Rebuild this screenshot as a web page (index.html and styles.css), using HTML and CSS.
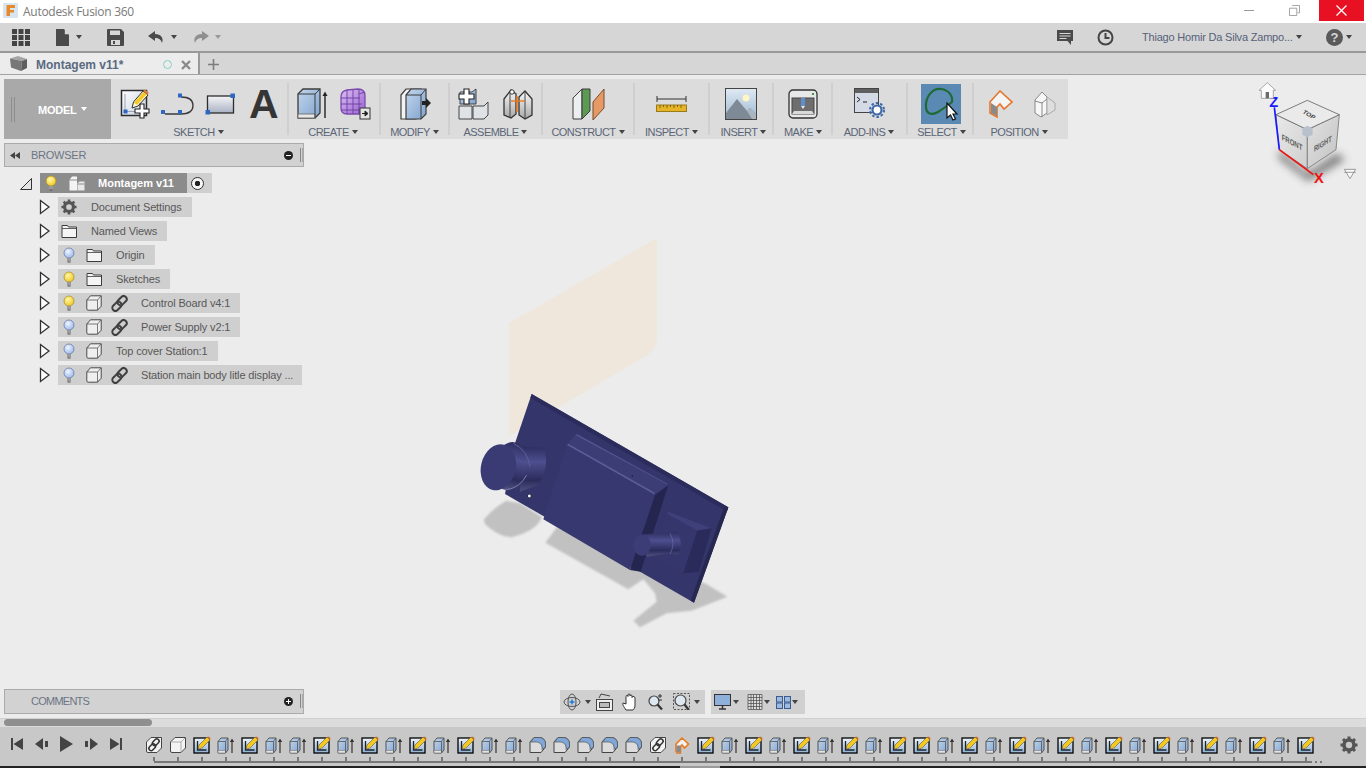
FILE: index.html
```html
<!DOCTYPE html>
<html lang="en">
<head>
<meta charset="utf-8">
<title>Autodesk Fusion 360</title>
<link rel="stylesheet" href="styles.css">
</head>
<body>
<svg class="defs" width="0" height="0" aria-hidden="true">
  <defs>
    <linearGradient id="gBox" x1="0" y1="0" x2="1" y2="1"><stop offset="0" stop-color="#fff"/><stop offset="1" stop-color="#c3d0e0"/></linearGradient>
    <linearGradient id="gSky" x1="0" y1="0" x2="0" y2="1"><stop offset="0" stop-color="#eef4fb"/><stop offset="1" stop-color="#8fb2d9"/></linearGradient>
    <linearGradient id="gRect" x1="0" y1="0" x2="0" y2="1"><stop offset="0" stop-color="#f4f5f7"/><stop offset="1" stop-color="#a9b1c3"/></linearGradient>
    <linearGradient id="gBlue" x1="0" y1="0" x2="1" y2="1"><stop offset="0" stop-color="#c3d6ec"/><stop offset="1" stop-color="#7fa3cf"/></linearGradient>
    <linearGradient id="gGrey" x1="0" y1="0" x2="0" y2="1"><stop offset="0" stop-color="#fafafa"/><stop offset="1" stop-color="#a8a8a8"/></linearGradient>
    <linearGradient id="gPurple" x1="0" y1="0" x2="1" y2="1"><stop offset="0" stop-color="#dcbdf2"/><stop offset="1" stop-color="#9a63d0"/></linearGradient>
    <linearGradient id="gMount" x1="0" y1="0" x2="0" y2="1"><stop offset="0" stop-color="#dfe9f2"/><stop offset="1" stop-color="#9fbad3"/></linearGradient>
    <radialGradient id="gBulbY" cx=".4" cy=".35" r=".7"><stop offset="0" stop-color="#fff7a8"/><stop offset="1" stop-color="#f2c71d"/></radialGradient>
    <radialGradient id="gBulbB" cx=".4" cy=".35" r=".7"><stop offset="0" stop-color="#f0f5ff"/><stop offset="1" stop-color="#98b6ea"/></radialGradient>
    <linearGradient id="gCyl" x1="0" y1="0" x2="0" y2="1"><stop offset="0" stop-color="#2c2d5e"/><stop offset=".35" stop-color="#4d4f8f"/><stop offset=".75" stop-color="#2b2c5c"/><stop offset="1" stop-color="#50527f"/></linearGradient>
    <linearGradient id="gFaceL" x1="0" y1="0" x2="1" y2="1"><stop offset="0" stop-color="#e9e9e9"/><stop offset="1" stop-color="#cfcfcf"/></linearGradient>
    <linearGradient id="gFaceR" x1="0" y1="0" x2="1" y2="1"><stop offset="0" stop-color="#e2e2e2"/><stop offset="1" stop-color="#c2c2c2"/></linearGradient>
    <filter id="fBlur" x="-30%" y="-30%" width="160%" height="160%"><feGaussianBlur stdDeviation="12"/></filter>
    <filter id="fShadow" x="-5%" y="-5%" width="110%" height="110%"><feGaussianBlur stdDeviation="2.500"/></filter>

    <symbol id="bulbY" viewBox="0 0 16 16"><circle cx="8" cy="6" r="5" fill="url(#gBulbY)" stroke="#a98f2a" stroke-width=".8"/><path d="M6 11h4v3.500H6z" fill="#9a9a9a"/><path d="M6.500 15h3" stroke="#555"/></symbol>
    <symbol id="bulbB" viewBox="0 0 16 16"><circle cx="8" cy="6" r="5" fill="url(#gBulbB)" stroke="#6b7fa8" stroke-width=".8"/><path d="M6 11h4v3.500H6z" fill="#9a9a9a"/><path d="M6.500 15h3" stroke="#555"/></symbol>
    <symbol id="folder" viewBox="0 0 16 16"><path d="M1 2.500h5.500l1 1.500H15.500v10.500H1z" fill="#f4f4f4" stroke="#3c3c3c"/><path d="M1 5.500h14.500" stroke="#3c3c3c" stroke-width=".8"/></symbol>
    <symbol id="comp" viewBox="0 0 16 16"><path d="M.8 5 4.500.8H15.200v10.400L11.500 15.200H2.300A1.500 1.500 0 0 1 .8 13.700z" fill="#efefef" stroke="#4a4a4a"/><path d="M.8 5H11.500V15.200M11.500 5 15.200.8" fill="none" stroke="#5a5a5a" stroke-width=".8"/></symbol>
    <symbol id="link" viewBox="0 0 18 18"><g fill="none" stroke="#3f3f3f" stroke-width="2.100"><rect x="8.500" y=".5" width="6.500" height="11" rx="3.200" transform="rotate(45 11.750 6)"/><rect x="3" y="6.500" width="6.500" height="11" rx="3.200" transform="rotate(45 6.250 12)"/></g></symbol>
    <symbol id="gear" viewBox="0 0 18 18"><circle cx="9" cy="9" r="5" fill="none" stroke="#555" stroke-width="3.600"/><g stroke="#555" stroke-width="3"><path d="M9 .5v3M9 14.500v3M.5 9h3M14.500 9h3M3 3l2.100 2.100M12.900 12.900 15 15M3 15l2.100-2.100M12.900 5.100 15 3"/></g></symbol>
    <symbol id="tri" viewBox="0 0 12 16"><path d="M1.500 1.500 10 8 1.500 14.500z" fill="#fdfdfd" stroke="#333" stroke-width="1.300"/></symbol>

    <symbol id="tS" viewBox="0 0 18 18"><rect x="1" y="2" width="15" height="15" fill="url(#gSky)" stroke="#000" stroke-width="1.300"/><path d="M4.500 5v9h9" fill="none" stroke="#222" stroke-width="1.300"/><path d="m5 13 1-4L14 1l3 3-8 8z" fill="#f4c81f" stroke="#555" stroke-width=".6"/><path d="m14 1 3 3 .8-1.200L15.500.4z" fill="#d9772f"/></symbol>
    <symbol id="tE" viewBox="0 0 18 18"><path d="M1 5.500 4 2h7v12l-2.500 3H1z" fill="url(#gBlue)" stroke="#555" stroke-width="1"/><path d="M1 14.500h7.500v2.500H1z" fill="#e4e4e4" stroke="#777" stroke-width=".6"/><path d="M1 5.500h7.500V17M8.500 5.500 11 2" fill="none" stroke="#555" stroke-width=".8"/><path d="M15 17V5" stroke="#333" stroke-width="1.200"/><path d="m12.800 6 2.200-3.500L17.200 6z" fill="#333"/></symbol>
    <symbol id="tC" viewBox="0 0 18 18"><path d="M1.500 6 6 1.500h10.500v10.500L12 16.500H3a1.500 1.500 0 0 1-1.500-1.500z" fill="#f3f3f3" stroke="#444"/><path d="M1.500 6H12v10.500M12 6l4.500-4.500" fill="none" stroke="#999" stroke-width=".8"/></symbol>
    <symbol id="tL" viewBox="0 0 18 18"><path d="M1.500 6 6 1.500h10.500v10.500L12 16.500H3a1.500 1.500 0 0 1-1.500-1.500z" fill="#f3f3f3" stroke="#444"/><g fill="none" stroke="#333" stroke-width="1.500"><rect x="8.500" y="2.500" width="4.500" height="7.500" rx="2.200" transform="rotate(45 10.750 6.250)"/><rect x="5" y="7.500" width="4.500" height="7.500" rx="2.200" transform="rotate(45 7.250 11.250)"/></g></symbol>
    <symbol id="tF" viewBox="0 0 18 18"><path d="M1 6 5 1.500h5.500A6 6 0 0 1 16.500 8v3L12 16.500H1z" fill="#dcdcdc" stroke="#444"/><path d="M5 1.500h5.500A6 6 0 0 1 16.500 8v3l-3.500 2.500V11A6 6 0 0 0 7.500 6H1.500z" fill="#7fa6d6" stroke="#555" stroke-width=".7"/></symbol>
    <symbol id="tM" viewBox="0 0 18 18"><path d="M3 8 9 2 15.500 8 11.500 12 9 9 7.500 10.500V17H4L3 15z" fill="#f1f1f1" stroke="#e8791d" stroke-width="1.600"/><path d="M3.500 9.500h4v7H4.500L3.500 15z" fill="#8a8a8a"/></symbol>
  </defs>
</svg>

<div class="app">
  <header class="titlebar">
    <svg class="app-logo" width="15" height="15" viewBox="0 0 15 15"><rect width="15" height="15" fill="#d6e5f2"/><path d="M3.500 2H12v3H7v2h4v2.500H7V13H3.500z" fill="#e88a2a"/></svg>
    <span class="app-name">Autodesk Fusion 360</span>
    <div class="winctl">
      <span class="win-min"></span>
      <svg class="win-max" width="11" height="11" viewBox="0 0 12 12"><path d="M3.500.5h8v8h-2M.500 3.500h8v8h-8z" fill="none" stroke="#9a9a9a"/></svg>
      <span class="win-close"><svg width="11" height="11" viewBox="0 0 11 11"><path d="m.5.500 10 10M10.500.500l-10 10" stroke="#fff" stroke-width="1.300"/></svg></span>
    </div>
  </header>

  <nav class="qat">
    <svg class="q-grid" width="18" height="17" viewBox="0 0 18 17"><path fill="#444" d="M0 0h5v5H0zM6.500 0h5v5h-5zM13 0h5v5h-5zM0 6h5v5H0zM6.500 6h5v5h-5zM13 6h5v5h-5zM0 12h5v5H0zM6.500 12h5v5h-5zM13 12h5v5h-5z"/></svg>
    <svg class="q-file" width="14" height="17" viewBox="0 0 14 17"><path fill="#4a4a4a" d="M0 0h8l5 5.500V17H0z"/><path fill="#d6d6d6" d="M8.800 0 14 5.200H8.800z"/></svg>
    <i class="caret q-caret"></i>
    <svg class="q-save" width="17" height="17" viewBox="0 0 17 17"><path fill="#4a4a4a" d="M1 0h13l3 3v13a1 1 0 0 1-1 1H1a1 1 0 0 1-1-1V1a1 1 0 0 1 1-1z"/><path fill="#d6d6d6" d="M3 1.500h10v4.500H3zM4 11h9v5H4z"/><path fill="#4a4a4a" d="M6 12h2v3H6z"/></svg>
    <svg class="q-undo" width="17" height="13" viewBox="0 0 17 13"><path fill="#4a4a4a" d="M7 0 0 5l7 5V7c4 0 6 1.500 7 5 2-5-1-9-7-9z"/></svg>
    <i class="caret q-caret"></i>
    <svg class="q-redo" width="17" height="13" viewBox="0 0 17 13"><path fill="#8f8f8f" d="m10 0 7 5-7 5V7c-4 0-6 1.500-7 5-2-5 1-9 7-9z"/></svg>
    <i class="caret caret-light q-caret"></i>
    <div class="qat-right">
      <svg class="q-chat" width="16" height="15" viewBox="0 0 16 15"><path fill="#4a4a4a" d="M0 0h16v11h-2v4l-3.500-4H0z"/><path stroke="#d6d6d6" d="M2.500 3.500h11M2.500 6h11M2.500 8.500h7"/></svg>
      <svg class="q-clock" width="17" height="17" viewBox="0 0 17 17"><circle cx="8.500" cy="8.500" r="7" fill="none" stroke="#444" stroke-width="2"/><path d="M8.500 4v5h4" fill="none" stroke="#444" stroke-width="2"/></svg>
      <span class="user">Thiago Homir Da Silva Zampo...</span>
      <i class="caret user-caret"></i>
      <span class="help">?</span>
      <i class="caret help-caret"></i>
    </div>
  </nav>

  <div class="tabs">
    <div class="tab">
      <svg class="tab-cube" width="17" height="15" viewBox="0 0 17 15"><path d="M0 2.500 8 0l9 3-5 2z" fill="#a5a5a5"/><path d="m0 2.500 1 9 10 3.500 1-10z" fill="#777"/><path d="m12 5 5-2v9l-6 3z" fill="#5f5f5f"/></svg>
      <span class="tab-name">Montagem v11*</span>
      <span class="tab-ring"></span>
      <svg class="tab-x" width="10" height="10" viewBox="0 0 10 10"><path d="m1 1 8 8M9 1 1 9" stroke="#8a8a8a" stroke-width="2.400"/></svg>
    </div>
    <svg class="tab-plus" width="13" height="13" viewBox="0 0 13 13"><path d="M6.500 1v11M1 6.500h11" stroke="#7c7c7c" stroke-width="1.600"/></svg>
  </div>

  <main class="stage">
    <svg class="viewport" width="1366" height="643" viewBox="0 75 1366 643">
      <path d="M509 323 657 238V337Q657 350 643 358L509 436V500H509z" fill="#efe7dc"/>
      <g transform="translate(470 380) scale(.33333)">
        <g fill="#c1c1c1" filter="url(#fShadow)">
          <path d="M108 362Q70 385 42 418 40 432 60 445 90 470 125 472 170 460 195 440 215 420 215 410L150 370z"/>
          <path d="M226 488 262 440 520 560 705 610 772 650 665 692 590 700 510 742 490 722 560 665 555 640 520 598 475 628z"/>
        </g>
        <path d="M185 42 775 382 672 668 105 342 135 190z" fill="#34356a"/>
        <path d="M185 42 775 382 771 394 181 54z" fill="#2b2c5b"/>
        <path d="M775 382 672 668 662 662 763 380z" fill="#27284f"/>
        <path d="M315 165 595 315 555 345 290 195z" fill="#3c3d74"/>
        <path d="M290 195 555 345 552 337 296 192z" fill="#5a5c95"/>
        <path d="M290 195 555 345 480 570 220 418z" fill="#37386f"/>
        <path d="M595 315 555 345 480 570 512 575z" fill="#25264f"/>
        <path d="M315 165 595 315 590 310 322 163z" fill="#52538f"/>
        <path d="M485 285h4v6h-4z" fill="#25264f"/>
        <path d="M595 395 725 445 682 452 590 402z" fill="#3f4079"/>
        <path d="M590 402 682 452 640 580 540 530z" fill="#35366c"/>
        <path d="M725 445 682 452 640 580 686 576z" fill="#2a2b5b"/>
        <path d="M518 463 605 458 622 455Q642 490 625 524L600 520 530 530Z" fill="url(#gCyl)"/>
        <ellipse cx="516" cy="496" rx="26" ry="32" fill="#3c3d76"/>
        <path d="M600 460Q618 490 600 522" fill="none" stroke="#6a6ca5" stroke-width="2"/>
        <path d="M150 198 222 203Q240 260 205 315L150 335z" fill="url(#gCyl)"/>
        <ellipse cx="118" cy="258" rx="50" ry="73" transform="rotate(14 118 258)" fill="url(#gCyl)"/>
        <ellipse cx="85" cy="262" rx="52" ry="70" transform="rotate(14 85 262)" fill="#3a3b74"/>
        <path d="M105 330Q150 325 170 285" fill="none" stroke="#7c7eb2" stroke-width="3"/>
        <path d="M130 190Q172 210 180 260" fill="none" stroke="#5e609d" stroke-width="3"/>
        <circle cx="178" cy="348" r="6" fill="#ececec" stroke="#26274f" stroke-width="3"/>
      </g>
      <g class="cube" transform="translate(1250 78) scale(.33333)">
        <path d="M88 215 172 285 262 225 285 245 175 310 85 240z" fill="#555" opacity=".75" filter="url(#fBlur)"/>
        <path d="M172 155 78 110 88 215 172 272z" fill="url(#gFaceL)" stroke="#777" stroke-width="2.500"/>
        <path d="M172 155 268 110 258 215 172 272z" fill="url(#gFaceR)" stroke="#777" stroke-width="2.500"/>
        <path d="M172 67 268 110 172 155 78 110z" fill="#eaeaea" stroke="#666" stroke-width="2.500"/>
        <path d="M172 143 188 151V170L172 178 157 170V151z" fill="#b8c0cd"/>
        <text class="cube-t" transform="matrix(.95 .5 0 1.300 95 185)">FRONT</text>
        <text class="cube-t" transform="matrix(.9 -.55 0 1.300 192 222)">RIGHT</text>
        <text class="cube-t cube-top" transform="matrix(.7 .42 -.5 .55 156 104)">TOP</text>
        <path d="M73 88 88 215" stroke="#1a1aff" stroke-width="5" fill="none"/>
        <path d="M88 215 190 290" stroke="#f01010" stroke-width="5" fill="none"/>
        <text class="axis axis-z" x="58" y="87">Z</text>
        <text class="axis axis-x" x="192" y="316">X</text>
        <path d="M27 37 52 14 77 37H70V61H34V37z" fill="#fbfbfb" stroke="#999" stroke-width="2.500"/>
        <path d="M47 42h10v19H47z" fill="#6a6a6a"/>
        <path d="M283 274H317L300 302z" fill="#fafafa" stroke="#888" stroke-width="2.500"/>
        <path d="M283 283H317" stroke="#888" stroke-width="2.500"/>
      </g>
    </svg>

    <section class="ribbon">
      <div class="model"><span class="grip"></span><span class="model-name">MODEL</span><i class="caret caret-white"></i></div>

      <div class="rgroup g-sketch">
        <div class="ricons">
          <svg width="30" height="31" viewBox="0 0 30 31"><rect x="1.500" y="2.500" width="25" height="25" fill="url(#gBox)" stroke="#2d2d2d" stroke-width="1.500"/><path d="M5 6v17.500h17" fill="none" stroke="#9aa3ae"/><rect x="3.500" y="21.500" width="4" height="4" fill="#2e66c4"/><path d="M12 20 13.500 14 23 3l5 4-10 11z" fill="#fff7d0" stroke="#333"/><path d="M14 14.500 23.500 4l3 2.500-9.500 10.500z" fill="#f5c928"/><path d="m23 3 2-1.500 3.500 3L28 7z" fill="#d77d3b"/><path d="M20 16h4v5h5v4h-5v5h-4v-5h-5v-4h5z" fill="#fff" stroke="#222" stroke-width="1.100"/></svg>
          <svg width="36" height="30" viewBox="0 0 36 30"><path d="M6 25H22M22 8Q34 8 34 16.500 34 25 22 25" fill="none" stroke="#3a3a3a" stroke-width="1.300"/><path fill="#2e66c4" d="M2 21h4v4H2zM19 21h4v4h-4zM19 4.500h4v4h-4z"/></svg>
          <svg class="ic-rect" width="30" height="30" viewBox="0 0 30 30"><rect x="2.500" y="7" width="26" height="17" fill="url(#gRect)" stroke="#2d2d2d" stroke-width="1.300"/><path fill="#2e66c4" d="M.5 21h4.500v4.500H.5zM25.500 4.500H30V9h-4.500z"/></svg>
          <span class="big-a">A</span>
        </div>
        <div class="rlabel">SKETCH<i class="caret"></i></div>
      </div>

      <div class="rgroup g-create">
        <div class="ricons">
          <svg width="31" height="32" viewBox="0 0 31 32"><path d="M1 6 6 1H23V25l-5 5H1z" fill="url(#gBlue)" stroke="#3c3c3c" stroke-width="1.300"/><path d="M1 26H18V30H1z" fill="#e8e8e8" stroke="#777"/><path d="M1 6H18V30M18 6 23 1" fill="none" stroke="#3c3c3c"/><path d="M28 30V7" stroke="#222" stroke-width="1.400"/><path d="M25.500 8 28 3.500 30.500 8z" fill="#222"/></svg>
          <svg width="32" height="32" viewBox="0 0 32 32"><path d="M2 9Q2 3 8 2L19 1Q26 1 26 8V20Q26 26 20 26H8Q2 26 2 20z" fill="url(#gPurple)" stroke="#7b4bb0" stroke-width="1.300"/><path d="M2 10H21M2 16H23M2 22H23M8 2V26M14 2V26M20 2V26M20 6 26 4" fill="none" stroke="#6a3fa3" stroke-width=".9"/><rect x="21" y="20" width="10" height="11" fill="#e4e4e4" stroke="#333"/><path d="M23 25.500H27M26 23l3 2.500-3 2.500z" stroke="#222" fill="#222"/></svg>
        </div>
        <div class="rlabel">CREATE<i class="caret"></i></div>
      </div>

      <div class="rgroup g-modify">
        <div class="ricons">
          <svg width="31" height="32" viewBox="0 0 31 32"><path d="M1 7 6 1H21V26L16 31H1z" fill="#f3f3f3" stroke="#3c3c3c" stroke-width="1.200"/><path d="M6 7 11 1H26V26L21 31H6z" fill="url(#gBlue)" stroke="#3c3c3c" stroke-width="1.200"/><path d="M6 7H21V31M21 7 26 1" fill="none" stroke="#3c3c3c"/><path d="M22 13h4v-3l5 5-5 5v-3h-4z" fill="#222"/></svg>
        </div>
        <div class="rlabel">MODIFY<i class="caret"></i></div>
      </div>

      <div class="rgroup g-assemble">
        <div class="ricons">
          <svg width="31" height="32" viewBox="0 0 31 32"><path d="M1 18H14V31H1z" fill="#dfe3e8" stroke="#444"/><path d="M15 18H26L30 14V27L26 31H15z" fill="#dfe3e8" stroke="#444"/><path d="M2 4H14L18 1V16H2z" fill="url(#gBlue)" stroke="#444"/><path d="M6 1h5v5h5v5h-5v5H6v-5H1V6h5z" fill="#fff" stroke="#222" stroke-width="1.100"/></svg>
          <svg width="30" height="32" viewBox="0 0 30 32"><path d="M1 11 8 2 13 6V26L8 30 1 27z" fill="url(#gGrey)" stroke="#333" stroke-width="1.300"/><path d="M29 11 22 3 16 9V27L22 31 29 27z" fill="url(#gGrey)" stroke="#333" stroke-width="1.300"/><path d="M7 4V29M22 4V30" stroke="#444"/><path d="M8 13 22 13" stroke="#e87a1e" stroke-width="1.400"/><path d="M14 8V24" stroke="#e87a1e" stroke-width="1.600"/><circle cx="9" cy="4" r="2.200" fill="#fff" stroke="#333"/></svg>
        </div>
        <div class="rlabel">ASSEMBLE<i class="caret"></i></div>
      </div>

      <div class="rgroup g-construct">
        <div class="ricons">
          <svg width="33" height="32" viewBox="0 0 33 32"><path d="M1 10 10 1V31H1z" fill="#eceef0" stroke="#3c3c3c"/><path d="M10 1H10L18 1V23L10 31z" fill="#5d9953" stroke="#3c3c3c"/><path d="M21 14 32 1V20L21 32z" fill="#e59a66" stroke="#7a4a2a"/></svg>
        </div>
        <div class="rlabel">CONSTRUCT<i class="caret"></i></div>
      </div>

      <div class="rgroup g-inspect">
        <div class="ricons">
          <svg width="31" height="17" viewBox="0 0 31 17"><path d="M1 4H30" stroke="#333"/><path d="M1 1V7M30 1V7" stroke="#333"/><rect x=".5" y="10" width="30" height="6.500" fill="#e6b527" stroke="#9a7a1a"/><path d="M4 10v3M7.500 10v2M11 10v3M14.500 10v2M18 10v3M21.500 10v2M25 10v3" stroke="#6a5210" stroke-width=".8"/></svg>
        </div>
        <div class="rlabel">INSPECT<i class="caret"></i></div>
      </div>

      <div class="rgroup g-insert">
        <div class="ricons">
          <svg width="32" height="32" viewBox="0 0 32 32"><rect x=".5" y=".5" width="31" height="31" fill="url(#gMount)" stroke="#444"/><circle cx="21" cy="10" r="3.500" fill="#fff6c8"/><path d="M1 31V25L12 11 22 23 25 20 31 26V31z" fill="#7e8a96"/><path d="M22 23 25 20 31 26V31H27z" fill="#a9b5c0"/></svg>
        </div>
        <div class="rlabel">INSERT<i class="caret"></i></div>
      </div>

      <div class="rgroup g-make">
        <div class="ricons">
          <svg width="30" height="30" viewBox="0 0 30 30"><rect x="1" y="1" width="28" height="28" rx="4" fill="#e8e8e8" stroke="#333" stroke-width="1.300"/><rect x="4" y="9" width="22" height="16" fill="#6e6e6e" stroke="#444"/><path d="M6 22H24L26 25H4z" fill="#d9d9d9"/><rect x="13" y="9" width="4" height="8" fill="#5f8fd0"/><path d="M13 17H17L15 20z" fill="#e8e8e8"/><rect x="24" y="4" width="2" height="2" fill="#3a9a3a"/></svg>
        </div>
        <div class="rlabel">MAKE<i class="caret"></i></div>
      </div>

      <div class="rgroup g-addins">
        <div class="ricons">
          <svg width="32" height="31" viewBox="0 0 32 31"><rect x=".5" y=".5" width="24" height="24" fill="#d4dbe6" stroke="#444"/><rect x="1" y="1" width="23" height="4" fill="#5f5f5f"/><path d="m3 9 3 2.500-3 2.500M9 14h4" fill="none" stroke="#222"/><circle cx="23" cy="22" r="4.500" fill="#fff" stroke="#3f68a8" stroke-width="2.200"/><circle cx="23" cy="22" r="7" fill="none" stroke="#3f68a8" stroke-width="2" stroke-dasharray="2.500 2"/></svg>
        </div>
        <div class="rlabel">ADD-INS<i class="caret"></i></div>
      </div>

      <div class="rgroup g-select">
        <div class="ricons">
          <div class="select-tile">
            <svg width="40" height="40" viewBox="0 0 40 40"><path d="M5 24C4 12 12 4 20 5 28 6 32 12 31 18 26 22 22 25 17 28 12 31 6 31 5 24z" fill="none" stroke="#1e6a34" stroke-width="2.200"/><path d="M26 19V34L29.500 31 32 36 34.500 35 32 30H36z" fill="#fff" stroke="#111" stroke-width="1.200"/></svg>
          </div>
        </div>
        <div class="rlabel">SELECT<i class="caret"></i></div>
      </div>

      <div class="rgroup g-position">
        <div class="ricons">
          <svg width="24" height="28" viewBox="0 0 24 28"><path d="M1 12 11 1 23 12 15 19 11 14 8 17V27L1 23z" fill="#f4f4f4" stroke="#e5762a" stroke-width="1.600"/><path d="M2 13 8 17V26L2 23z" fill="#8a8a8a"/></svg>
          <svg width="22" height="28" viewBox="0 0 22 28"><path d="M1 10 8 2 13 7V23L7 27 1 23z" fill="#f7f7f7" stroke="#888"/><path d="M13 7 21 13V20L13 25z" fill="#dedede" stroke="#aaa"/><path d="M8 12V27" stroke="#888"/><path d="M1 11 8 13 13 9" fill="none" stroke="#888"/></svg>
        </div>
        <div class="rlabel">POSITION<i class="caret"></i></div>
      </div>
    </section>

    <aside class="browser">
      <div class="panel-head">
        <svg class="dbl" width="10" height="7" viewBox="0 0 10 7"><path d="M5 0v7L0 3.500zM10 0v7L5 3.500z" fill="#444"/></svg>
        <span class="panel-title">BROWSER</span>
        <span class="pin pin-minus"></span>
        <span class="panel-grip"></span>
      </div>
      <ul class="tree">
        <li class="node root">
          <svg class="root-tri" width="12" height="12" viewBox="0 0 12 12"><path d="M11.500.500V11.500H.500z" fill="#e4e4e4" stroke="#333"/></svg>
          <div class="root-row">
            <div class="root-main">
              <span class="slot"><svg width="16" height="16"><use href="#bulbY"/></svg></span>
              <span class="slot"><svg width="16" height="15" viewBox="0 0 16 15"><path d="M.5 14.500V4L3 .5H8V14.500z" fill="#f4f4f4"/><path d="M8.500 14.500V7.500L10.500 5.500H15.500V14.500z" fill="#e8e8e8"/><path d="M.5 4H8M8.500 8H15.500" stroke="#777" stroke-width=".8"/></svg></span>
              <span class="root-name">Montagem v11</span>
            </div>
            <span class="target"></span>
          </div>
        </li>
        <li class="node"><svg class="chev" width="12" height="16"><use href="#tri"/></svg><div class="row"><span class="slot"><svg width="16" height="16"><use href="#gear"/></svg></span><span class="lbl">Document Settings</span></div></li>
        <li class="node"><svg class="chev" width="12" height="16"><use href="#tri"/></svg><div class="row"><span class="slot"><svg width="16" height="16"><use href="#folder"/></svg></span><span class="lbl">Named Views</span></div></li>
        <li class="node"><svg class="chev" width="12" height="16"><use href="#tri"/></svg><div class="row"><span class="slot"><svg width="16" height="16"><use href="#bulbB"/></svg></span><span class="slot"><svg width="16" height="16"><use href="#folder"/></svg></span><span class="lbl">Origin</span></div></li>
        <li class="node"><svg class="chev" width="12" height="16"><use href="#tri"/></svg><div class="row"><span class="slot"><svg width="16" height="16"><use href="#bulbY"/></svg></span><span class="slot"><svg width="16" height="16"><use href="#folder"/></svg></span><span class="lbl">Sketches</span></div></li>
        <li class="node"><svg class="chev" width="12" height="16"><use href="#tri"/></svg><div class="row"><span class="slot"><svg width="16" height="16"><use href="#bulbY"/></svg></span><span class="slot"><svg width="16" height="16"><use href="#comp"/></svg></span><span class="slot"><svg width="17" height="17"><use href="#link"/></svg></span><span class="lbl">Control Board v4:1</span></div></li>
        <li class="node"><svg class="chev" width="12" height="16"><use href="#tri"/></svg><div class="row"><span class="slot"><svg width="16" height="16"><use href="#bulbB"/></svg></span><span class="slot"><svg width="16" height="16"><use href="#comp"/></svg></span><span class="slot"><svg width="17" height="17"><use href="#link"/></svg></span><span class="lbl">Power Supply v2:1</span></div></li>
        <li class="node"><svg class="chev" width="12" height="16"><use href="#tri"/></svg><div class="row"><span class="slot"><svg width="16" height="16"><use href="#bulbB"/></svg></span><span class="slot"><svg width="16" height="16"><use href="#comp"/></svg></span><span class="lbl">Top cover Station:1</span></div></li>
        <li class="node"><svg class="chev" width="12" height="16"><use href="#tri"/></svg><div class="row row-tight"><span class="slot"><svg width="16" height="16"><use href="#bulbB"/></svg></span><span class="slot"><svg width="16" height="16"><use href="#comp"/></svg></span><span class="slot"><svg width="17" height="17"><use href="#link"/></svg></span><span class="lbl">Station main body litle display ...</span></div></li>
      </ul>
    </aside>

    <aside class="comments panel-head">
      <span class="panel-title panel-title-c">COMMENTS</span>
      <span class="pin pin-plus"></span>
      <span class="panel-grip"></span>
    </aside>

    <div class="navbar">
      <div class="navgroup nav-a">
        <svg width="18" height="18" viewBox="0 0 18 18"><ellipse cx="9" cy="9" rx="8" ry="4.500" fill="none" stroke="#555"/><ellipse cx="9" cy="9" rx="4" ry="8" fill="none" stroke="#555"/><path d="M6.500 9h5M9 6.500v5" stroke="#1e7ae0" stroke-width="1.500"/></svg>
        <i class="caret nav-caret"></i>
        <svg class="nav-look" width="17" height="18" viewBox="0 0 17 18"><rect x=".5" y="6.500" width="16" height="11" fill="#eee" stroke="#444"/><rect x="3.500" y="9.500" width="10" height="5" fill="#bbb" stroke="#444"/><path d="M3 5 5 1 14 3" fill="none" stroke="#444"/></svg>
        <svg class="nav-hand" width="16" height="18" viewBox="0 0 16 18"><path d="M4 17C2 14 0 11 1 10L4 11V3.500C4 2 6 2 6 3.500V2C6 .5 8 .5 8 2V3C8 1.500 10 1.500 10 3V4.500C10 3 13 3 13 5V12C13 15 12 16 11 17z" fill="#fff" stroke="#333"/></svg>
        <svg class="nav-zoom" width="17" height="18" viewBox="0 0 17 18"><circle cx="7" cy="8" r="5" fill="#dde7f0" stroke="#444" stroke-width="1.200"/><path d="m10.500 11.500 4.500 5" stroke="#333" stroke-width="2.200"/><path d="M13 1v4M11 3h4M11 7h4" stroke="#333"/></svg>
        <svg class="nav-fit" width="17" height="18" viewBox="0 0 17 18"><rect x=".5" y=".5" width="16" height="16" fill="none" stroke="#555" stroke-dasharray="2 1.500"/><circle cx="7.500" cy="7.500" r="5.500" fill="#dde7f0" stroke="#444" stroke-width="1.200"/><path d="m11.500 11.500 4 5" stroke="#333" stroke-width="2.200"/></svg>
        <i class="caret nav-caret"></i>
      </div>
      <div class="navgroup nav-b">
        <svg width="18" height="16" viewBox="0 0 18 16"><rect x=".5" y=".5" width="16" height="11" fill="#8fb0d8" stroke="#333"/><path d="M5 15H12M8.500 12V15" stroke="#333" stroke-width="1.500"/></svg>
        <i class="caret nav-caret-s"></i>
        <svg class="nav-grid" width="16" height="16" viewBox="0 0 15 16"><path d="M.5.500h14v15H.5zM3.500.500v15M6 .500v15M9 .500v15M12 .500v15M.500 3.500h14M.500 6.500h14M.500 9.500h14M.500 12.500h14" fill="#ddd" stroke="#555" stroke-width=".8"/></svg>
        <i class="caret nav-caret-s"></i>
        <svg class="nav-vp" width="15" height="13" viewBox="0 0 15 13"><rect x=".5" y=".5" width="6" height="5.500" fill="#9db9dd" stroke="#3a5a90"/><rect x="8.500" y=".5" width="6" height="5.500" fill="#9db9dd" stroke="#3a5a90"/><rect x=".5" y="7" width="6" height="5.500" fill="#9db9dd" stroke="#3a5a90"/><rect x="8.500" y="7" width="6" height="5.500" fill="#9db9dd" stroke="#3a5a90"/></svg>
        <i class="caret nav-caret-s"></i>
      </div>
    </div>
  </main>

  <div class="tlscroll"><span class="tlthumb"></span></div>

  <footer class="timeline">
    <div class="tl-play">
      <svg width="12" height="14" viewBox="0 0 12 14"><path d="M0 1h2v12H0zM12 1v12L2.500 7z" fill="#444"/></svg>
      <svg width="13" height="12" viewBox="0 0 13 12"><path d="M8 0v12L0 6zM10 3h3v6h-3z" fill="#444"/></svg>
      <svg width="13" height="16" viewBox="0 0 13 16"><path d="M0 0 13 8 0 16z" fill="#444"/></svg>
      <svg width="13" height="12" viewBox="0 0 13 12"><path d="M5 0v12l8-6zM0 3h3v6H0z" fill="#444"/></svg>
      <svg width="12" height="14" viewBox="0 0 12 14"><path d="M10 1h2v12h-2zM0 1v12L9.500 7z" fill="#444"/></svg>
    </div>
    <div class="tl-track">
      <i class="tl"><svg width="18" height="18"><use href="#tL"/></svg></i>
      <i class="tl"><svg width="18" height="18"><use href="#tC"/></svg></i>
      <i class="tl"><svg width="18" height="18"><use href="#tS"/></svg></i>
      <i class="tl"><svg width="18" height="18"><use href="#tE"/></svg></i>
      <i class="tl"><svg width="18" height="18"><use href="#tS"/></svg></i>
      <i class="tl"><svg width="18" height="18"><use href="#tE"/></svg></i>
      <i class="tl"><svg width="18" height="18"><use href="#tE"/></svg></i>
      <i class="tl"><svg width="18" height="18"><use href="#tS"/></svg></i>
      <i class="tl"><svg width="18" height="18"><use href="#tE"/></svg></i>
      <i class="tl"><svg width="18" height="18"><use href="#tS"/></svg></i>
      <i class="tl"><svg width="18" height="18"><use href="#tE"/></svg></i>
      <i class="tl"><svg width="18" height="18"><use href="#tS"/></svg></i>
      <i class="tl"><svg width="18" height="18"><use href="#tE"/></svg></i>
      <i class="tl"><svg width="18" height="18"><use href="#tS"/></svg></i>
      <i class="tl"><svg width="18" height="18"><use href="#tE"/></svg></i>
      <i class="tl"><svg width="18" height="18"><use href="#tE"/></svg></i>
      <i class="tl"><svg width="18" height="18"><use href="#tF"/></svg></i>
      <i class="tl"><svg width="18" height="18"><use href="#tF"/></svg></i>
      <i class="tl"><svg width="18" height="18"><use href="#tF"/></svg></i>
      <i class="tl"><svg width="18" height="18"><use href="#tF"/></svg></i>
      <i class="tl"><svg width="18" height="18"><use href="#tF"/></svg></i>
      <i class="tl"><svg width="18" height="18"><use href="#tL"/></svg></i>
      <i class="tl"><svg width="18" height="18"><use href="#tM"/></svg></i>
      <i class="tl"><svg width="18" height="18"><use href="#tS"/></svg></i>
      <i class="tl"><svg width="18" height="18"><use href="#tE"/></svg></i>
      <i class="tl"><svg width="18" height="18"><use href="#tS"/></svg></i>
      <i class="tl"><svg width="18" height="18"><use href="#tE"/></svg></i>
      <i class="tl"><svg width="18" height="18"><use href="#tS"/></svg></i>
      <i class="tl"><svg width="18" height="18"><use href="#tE"/></svg></i>
      <i class="tl"><svg width="18" height="18"><use href="#tS"/></svg></i>
      <i class="tl"><svg width="18" height="18"><use href="#tE"/></svg></i>
      <i class="tl"><svg width="18" height="18"><use href="#tS"/></svg></i>
      <i class="tl"><svg width="18" height="18"><use href="#tS"/></svg></i>
      <i class="tl"><svg width="18" height="18"><use href="#tE"/></svg></i>
      <i class="tl"><svg width="18" height="18"><use href="#tS"/></svg></i>
      <i class="tl"><svg width="18" height="18"><use href="#tE"/></svg></i>
      <i class="tl"><svg width="18" height="18"><use href="#tS"/></svg></i>
      <i class="tl"><svg width="18" height="18"><use href="#tE"/></svg></i>
      <i class="tl"><svg width="18" height="18"><use href="#tS"/></svg></i>
      <i class="tl"><svg width="18" height="18"><use href="#tE"/></svg></i>
      <i class="tl"><svg width="18" height="18"><use href="#tS"/></svg></i>
      <i class="tl"><svg width="18" height="18"><use href="#tE"/></svg></i>
      <i class="tl"><svg width="18" height="18"><use href="#tS"/></svg></i>
      <i class="tl"><svg width="18" height="18"><use href="#tE"/></svg></i>
      <i class="tl"><svg width="18" height="18"><use href="#tS"/></svg></i>
      <i class="tl"><svg width="18" height="18"><use href="#tE"/></svg></i>
      <i class="tl"><svg width="18" height="18"><use href="#tS"/></svg></i>
      <i class="tl"><svg width="18" height="18"><use href="#tE"/></svg></i>
      <i class="tl"><svg width="18" height="18"><use href="#tS"/></svg></i>
    </div>
    <svg class="tl-gear" width="18" height="18"><use href="#gear"/></svg>
  </footer>
  <div class="taskbar"></div>
</div>
</body>
</html>
```

FILE: styles.css
```css
* { box-sizing: border-box; }
html, body { margin: 0; padding: 0; }
body { width: 1366px; height: 768px; overflow: hidden; font-family: "Liberation Sans", Arial, sans-serif; background: #ececec; }
.defs { position: absolute; }
svg { display: block; flex: none; }
ul { list-style: none; margin: 0; padding: 0; }
i { font-style: normal; }

.app { width: 1366px; height: 768px; display: flex; flex-direction: column; }

.caret { display: block; flex: none; width: 0; height: 0; border-left: 3.5px solid transparent; border-right: 3.5px solid transparent; border-top: 4px solid #444; }
.caret-light { border-top-color: #9a9a9a; }
.caret-white { border-top-color: #fff; }

/* title bar */
.titlebar { height: 23px; background: #fff; display: flex; align-items: center; flex: none; }
.app-logo { margin-left: 3px; margin-top: -2px; }
.app-name { margin-left: 5px; margin-top: -1px; font: 12px "Open Sans", sans-serif; color: #7a7a7a; letter-spacing: -.28px; }
.winctl { margin-left: auto; display: flex; align-items: flex-start; height: 23px; }
.win-min { display: block; width: 10px; height: 1px; background: #9a9a9a; margin: 10px 35px 0 0; }
.win-max { margin: 5px 19px 0 0; }
.win-close { display: flex; align-items: center; justify-content: center; width: 45px; height: 21px; background: #e81123; margin-right: 2px; }

/* quick access toolbar */
.qat { height: 30px; flex: none; background: #d6d6d6; border-bottom: 2px solid #999; display: flex; align-items: center; padding-left: 12px; }
.q-file { margin-left: 26px; }
.q-caret { margin-left: 6px; }
.q-save { margin-left: 25px; }
.q-undo { margin-left: 24px; }
.q-redo { margin-left: 15px; }
.qat-right { margin-left: auto; display: flex; align-items: center; padding-right: 14px; }
.q-clock { margin-left: 24px; }
.user { margin-left: 28px; font-size: 11px; letter-spacing: -.2px; color: #56617a; width: 152px; white-space: nowrap; }
.user-caret { margin-left: 2px; }
.help { margin-left: 24px; width: 17px; height: 17px; border-radius: 50%; background: #5a5a5a; color: #d6d6d6; font-weight: bold; font-size: 13px; line-height: 17px; text-align: center; }
.help-caret { margin-left: 3px; }

/* tabs */
.tabs { height: 22px; flex: none; background: #d6d6d6; border-bottom: 1px solid #a3a3a3; display: flex; align-items: center; }
.tab { width: 200px; height: 21px; background: #ececec; border-right: 2px solid #999; display: flex; align-items: center; padding: 2px 0 0 10px; }
.tab-cube { margin-top: -2px; }
.tab-name { margin-left: 9px; font-size: 12px; font-weight: bold; color: #5a6a80; width: 127px; white-space: nowrap; }
.tab-ring { width: 9px; height: 9px; border-radius: 50%; border: 1.5px solid #85d0c0; }
.tab-x { margin-left: 9px; }
.tab-plus { margin: 2px 0 0 7px; }

/* 3D area */
.stage { position: relative; flex: 1; background: #ececec; overflow: hidden; }
.viewport { position: absolute; left: 0; top: 0; }
.cube-t { font: bold 19px "Liberation Sans", sans-serif; fill: #5e5e5e; }
.cube-t.cube-top { fill: #444; font-size: 24px; }
.axis { font: bold 44px "Liberation Sans", sans-serif; }
.axis-z { fill: #1a1aff; }
.axis-x { fill: #f01010; }

/* ribbon */
.ribbon { position: absolute; left: 4px; top: 4px; width: 1064px; height: 60px; background: #dcdcdc; display: flex; }
.model { width: 107px; background: #a9a9a9; color: #fff; display: flex; align-items: center; padding: 2px 0 0 7px; }
.grip { width: 4px; height: 25px; border-left: 1px solid #8d8d8d; border-right: 1px solid #8d8d8d; margin-top: -2px; }
.model-name { margin-left: 23px; font-size: 11px; font-weight: bold; letter-spacing: -.25px; }
.model .caret { margin-left: 5px; margin-top: -2px; }
.rgroup { position: relative; display: flex; flex-direction: column; align-items: center; height: 60px; }
.rgroup::before { content: ""; position: absolute; left: -1px; top: 4px; width: 2px; height: 52px; background: #cfcfcf; }
.ricons { height: 46px; display: flex; align-items: center; justify-content: center; gap: 10px; padding-top: 3px; }
.rlabel { display: flex; align-items: center; font-size: 11px; letter-spacing: -.55px; color: #5b6577; line-height: 14px; }
.rlabel .caret { margin-left: 3px; border-top-color: #444; margin-top: -1px; }
.g-sketch { width: 177px; }
.g-sketch::before { display: none; }
.g-sketch .ricons { gap: 9px; margin-left: -1px; }
.g-sketch .rlabel { margin-left: -2px; }
.ic-rect { margin-left: 1px; }
.big-a { font-size: 41px; line-height: 40px; font-weight: bold; color: #353535; margin-left: 5px; width: 29px; }
.g-create { width: 92px; }
.g-create .ricons { gap: 11px; margin-left: -1px; }
.g-create .rlabel { margin-left: -2px; }
.g-modify { width: 69px; }
.g-modify .ricons { margin-left: 1px; }
.g-assemble { width: 93px; }
.g-assemble .ricons { gap: 14px; }
.g-construct { width: 92px; }
.g-inspect { width: 75px; }
.g-insert { width: 64px; }
.g-insert .rlabel { margin-left: 5px; }
.g-make { width: 59px; }
.g-make .rlabel { margin-left: 1px; }
.g-addins { width: 75px; }
.g-addins .rlabel { margin-left: -1px; }
.g-select { width: 66px; }
.g-select .rlabel { margin-left: 3px; }
.g-position { width: 95px; }
.g-position .ricons { gap: 21px; margin-left: 4px; }
.g-position .rlabel { margin-left: -3px; }
.select-tile { width: 40px; height: 40px; background: #5a8ab4; margin: 0 0 0 2px; }

/* browser panels */
.panel-head { height: 24px; border: 1px solid #aaa; background: #d2d2d2; display: flex; align-items: center; }
.browser { position: absolute; left: 4px; top: 68px; width: 300px; }
.dbl { margin-left: 5px; }
.panel-title { margin-left: 11px; font-size: 11px; color: #6c7585; letter-spacing: -.25px; }
.panel-title-c { margin-left: 26px; letter-spacing: -.75px; }
.pin { width: 9px; height: 9px; border-radius: 50%; background: #222; margin-left: auto; position: relative; }
.pin::after { content: ""; position: absolute; left: 2px; top: 4px; width: 5px; height: 1px; background: #fff; }
.pin-plus::before { content: ""; position: absolute; left: 4px; top: 2px; width: 1px; height: 5px; background: #fff; }
.panel-grip { width: 3px; height: 14px; margin: 0 0 0 7px; border-left: 1px solid #888; border-right: 1px solid #aaa; }
.tree { padding-top: 6px; display: flex; flex-direction: column; gap: 4px; }
.node { height: 20px; display: flex; align-items: center; padding-left: 35px; }
.chev { margin-right: 7px; }
.row { display: flex; align-items: center; height: 20px; background: #cfcfcf; padding-right: 10px; }
.row-tight { padding-right: 0; width: 244px; }
.slot { width: 25px; height: 20px; display: flex; align-items: center; padding-left: 3px; }
.lbl { margin-left: 8px; font-size: 11px; letter-spacing: -.14px; color: #585858; white-space: nowrap; }
.root { padding-left: 16px; }
.root-tri { margin-right: 8px; margin-top: 1px; }
.root-row { display: flex; align-items: center; height: 20px; background: #cfcfcf; width: 172px; }
.root-main { display: flex; align-items: center; height: 20px; width: 147px; background: #8c8c8c; }
.root-main .slot { width: 26px; padding-left: 3px; }
.root-name { margin-left: 6px; font-size: 11px; font-weight: bold; color: #fff; }
.target { width: 13px; height: 13px; margin-left: 4px; border-radius: 50%; border: 1px solid #333; background: radial-gradient(circle, #222 0 2.500px, #f6f6f6 3px); }
.comments { position: absolute; left: 4px; top: 614px; width: 300px; height: 25px; padding-bottom: 1px; }

/* navigation bar */
.navbar { position: absolute; left: 560px; top: 615px; display: flex; gap: 6px; }
.navgroup { height: 24px; background: #d0d0d0; display: flex; align-items: center; }
.nav-a { width: 145px; padding-left: 3px; }
.nav-b { width: 94px; padding-left: 3px; }
.nav-caret { margin-left: 4px; }
.nav-caret-s { margin-left: 1px; }
.nav-look { margin-left: 5px; }
.nav-hand { margin-left: 9px; }
.nav-zoom { margin-left: 9px; }
.nav-fit { margin-left: 9px; }
.nav-grid { margin-left: 8px; }
.nav-vp { margin-left: 6px; }

/* timeline */
.tlscroll { height: 9px; flex: none; background: #dcdcdc; border-top: 1px solid #d0d0d0; padding-left: 4px; }
.tlthumb { display: block; width: 148px; height: 7px; border-radius: 4px; background: #8f8f8f; }
.timeline { height: 39px; flex: none; background: #c8c8c8; display: flex; position: relative; }
.tl-play { width: 142px; flex: none; display: flex; align-items: center; gap: 12px; padding: 0 0 5px 11px; }
.tl-track { display: flex; height: 36px; position: relative; }
.tl-track::after { content: ""; position: absolute; left: 12px; right: 6px; bottom: 0; height: 2px; background: #777; }
.tl-track::before { content: ""; position: absolute; right: 1px; bottom: 0; width: 2px; height: 2px; background: #777; box-shadow: 5px 0 #777; }
.tl { position: relative; display: block; width: 24px; height: 36px; padding: 9px 0 0 3px; }
.tl::after { content: ""; position: absolute; left: 11px; bottom: 2px; width: 2px; height: 4px; background: #777; }
.tl-gear { position: absolute; left: 1340px; top: 9px; }
.taskbar { height: 2px; flex: none; background: linear-gradient(90deg, #222 680px, #9a9a9a 680px, #9a9a9a 720px, #222 720px); }
```
